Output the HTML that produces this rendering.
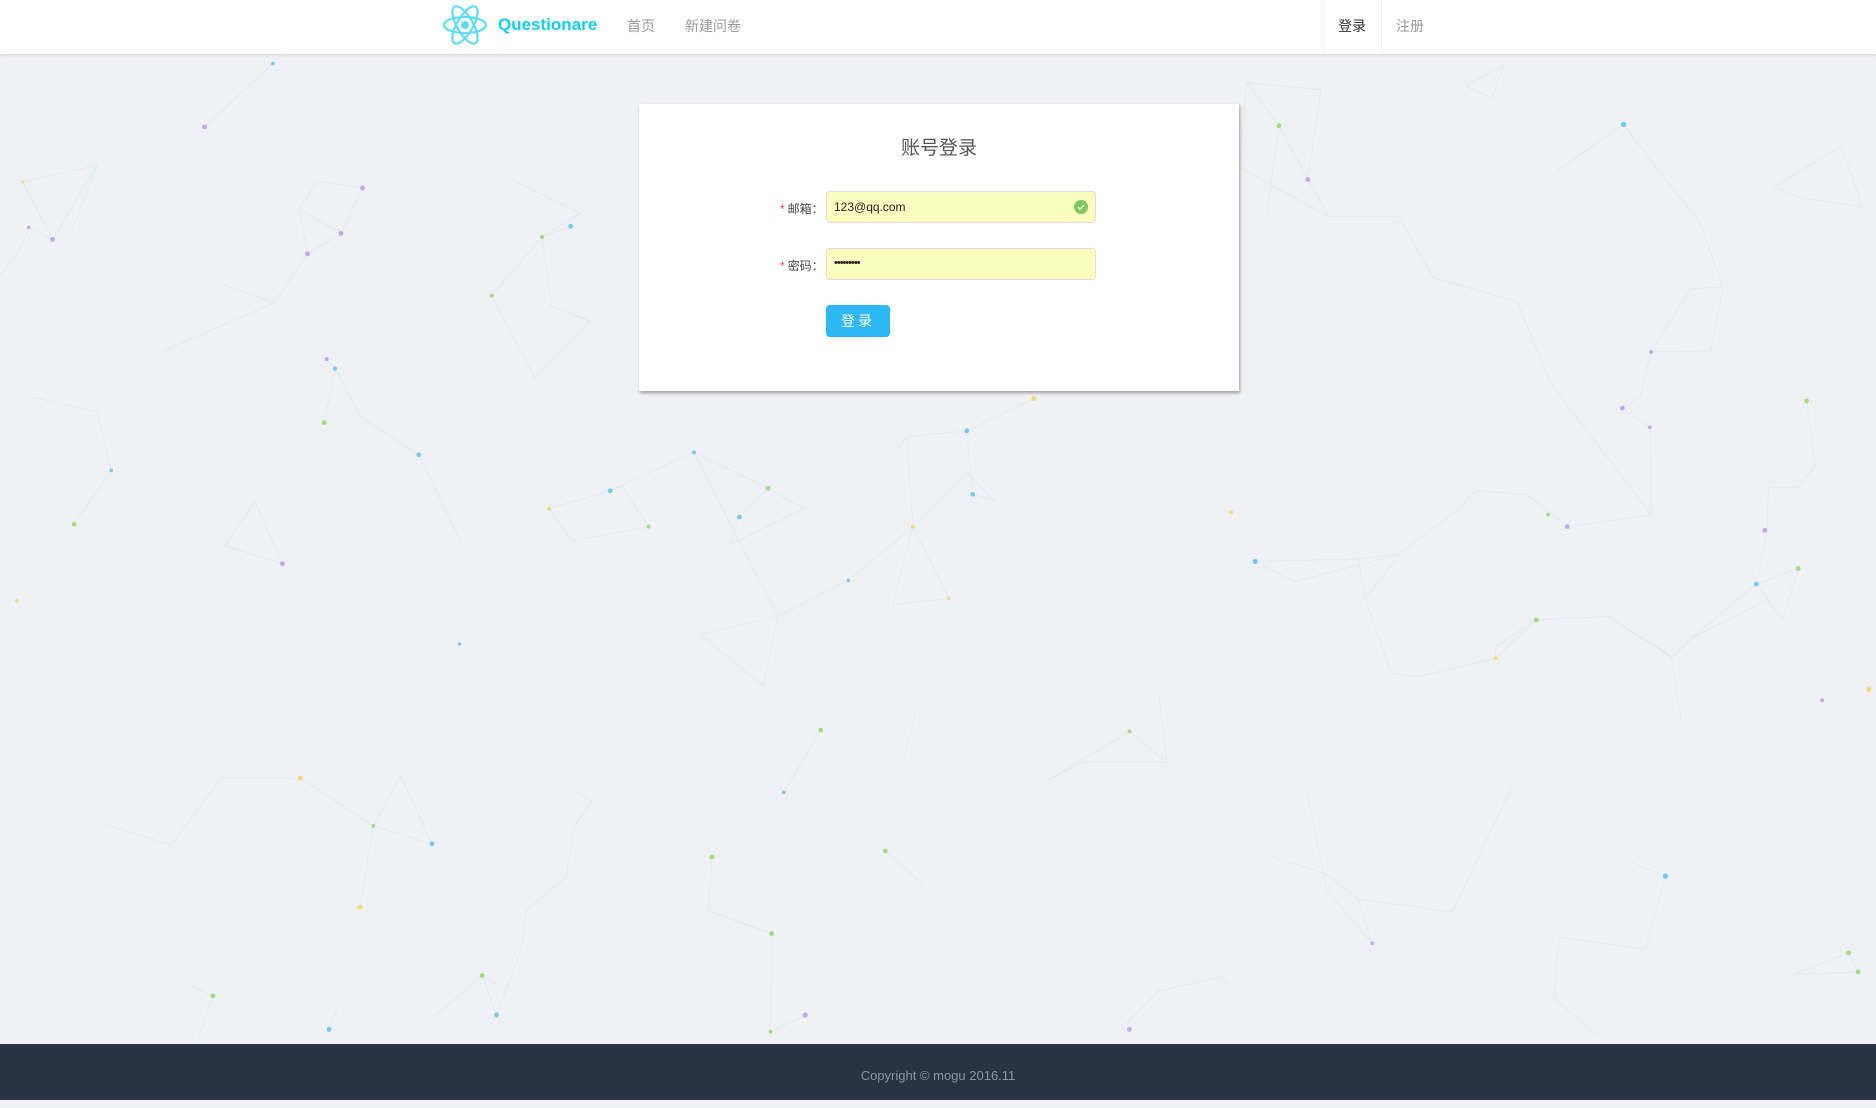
<!DOCTYPE html>
<html><head><meta charset="utf-8"><style>
*{margin:0;padding:0;box-sizing:border-box}
body{width:1876px;height:1100px;background:#eff1f4;font-family:"Liberation Sans","Noto Sans CJK SC",sans-serif;position:relative;overflow:hidden}
#bg{position:absolute;left:0;top:0;width:1876px;height:1100px}
.hdr{position:absolute;left:0;top:0;width:1876px;height:54px;background:#fff;box-shadow:0 1px 3px rgba(0,0,0,.12)}
.brand{position:absolute;left:498px;top:15px;font-size:17px;font-weight:bold;color:#10cff0}
.nav{position:absolute;top:16px;font-size:14px;color:#999}
.tab{position:absolute;top:0;height:54px;border-left:1px solid #f0f0f0;border-right:1px solid #f0f0f0}
.card{position:absolute;left:639px;top:104px;width:600px;height:287px;background:#fff;box-shadow:1px 2px 3px rgba(0,0,0,.35)}
.title{position:absolute;left:0;width:600px;top:29px;text-align:center;font-size:19px;color:#555}
.lbl{position:absolute;font-size:12px;color:#444}
.lbl b{color:#f04134;font-weight:normal;margin-right:3px}
.inp{position:absolute;left:187px;width:270px;height:32px;background:#fafdbe;border:1px solid #ddd;border-radius:4px;font-size:12px;color:#222;padding:8px 7px}
.btn{position:absolute;left:187px;top:201px;width:64px;height:32px;background:#2db7f5;border-radius:4px;color:#fff;font-size:14px;text-align:center;line-height:32px;letter-spacing:3px}
.foot{position:absolute;left:0;top:1044px;width:1876px;height:56px;background:#283444;color:#8c94a0;font-size:13px;text-align:center;line-height:64px}
</style></head><body>
<svg id="bg" viewBox="0 0 1568 919" preserveAspectRatio="none">
<g stroke="#9fd3ee" stroke-width="0.5" fill="none" opacity="0.3">
<path d="M171 106L228 53M19 152L81 138L44 200L24 190L16 210L0 230M19 152L44 200M81 138L60 193M250 175L265 151L303 157L285 195L257 212L250 175L285 195M257 212L229 253L182 236M229 253L137 293M273 300L280 308L301 348L350 380L385 452M280 308L271 353M23 331L81 344L93 393M62 438L93 393M428 150L485 178L453 198L411 247L447 316L493 268L461 256L453 198L477 189M459 425L510 410L520 406L542 440L478 452L459 425M510 410L580 378L642 408L672 425L610 455L618 432L642 408M580 378L650 515L585 530L638 573L650 515L709 485L763 440L793 500L746 505L763 440L808 395L831 418L813 413L808 360L758 365L763 440M808 360L864 333M758 365L750 375M213 419L188 456L236 471L213 419M1042 69L1104 75L1093 150L1069 105L1042 69L1036 140L1111 181L1093 150M1069 105L1059 178M1225 72L1257 54L1247 82L1225 72M1301 143L1357 104L1388 145L1421 186L1440 240L1413 241L1380 294L1430 293L1440 240M1380 294L1371 331L1356 341L1379 357L1380 430L1296 320L1268 252L1198 232L1169 181L1111 181M1483 156L1539 122L1557 173L1503 165L1483 156M1233 410L1276 413L1310 440L1380 430M1233 410L1220 425L1169 463L1135 467L1141 500L1170 463L1082 486L1049 469L1135 467M1141 500L1163 563L1186 565L1250 550L1284 518L1344 515L1398 549L1414 533L1468 488L1490 518L1503 475L1468 488L1477 442L1478 407L1503 407L1517 389L1510 335M1344 515L1397 549L1405 602M1284 518L1250 540L1250 550M1414 533L1475 502M944 611L975 637L904 637L874 653L944 611M969 581L975 637M595 716L592 761L645 780L644 862L673 848M686 610L655 662M740 711L773 740M765 597L755 635M1061 715L1108 730L1135 751L1147 788L1109 744L1093 665M1135 751L1214 762L1265 654M1362 720L1392 732L1375 793L1303 783L1299 834L1336 866M1545 796L1553 812L1499 814L1545 796M415 848L436 792L440 760L473 733L480 690L495 670L480 660M415 848L403 815L362 850L403 815L415 822M185 650L251 650L312 690L335 648L361 705L312 690L301 758M185 650L143 706L89 689M275 860L282 843M160 824L178 832L165 870M937 860L968 828L1021 816L1027 823"/>
</g>
<g opacity="0.85">
<circle cx="171" cy="106" r="2" fill="#b59cf6"/><circle cx="228" cy="53" r="1.5" fill="#5ec1f6"/><circle cx="44" cy="200" r="2" fill="#b59cf6"/><circle cx="24" cy="190" r="1.5" fill="#b59cf6"/><circle cx="19" cy="152" r="1.3" fill="#f4d35e"/><circle cx="303" cy="157" r="2" fill="#b59cf6"/><circle cx="285" cy="195" r="2" fill="#b59cf6"/><circle cx="257" cy="212" r="2" fill="#b59cf6"/><circle cx="273" cy="300" r="1.7" fill="#b59cf6"/><circle cx="280" cy="308" r="1.8" fill="#5ec1f6"/><circle cx="271" cy="353" r="2" fill="#8fd86c"/><circle cx="350" cy="380" r="2" fill="#5ec1f6"/><circle cx="93" cy="393" r="1.5" fill="#5ec1f6"/><circle cx="62" cy="438" r="2" fill="#8fd86c"/><circle cx="236" cy="471" r="2" fill="#b59cf6"/><circle cx="453" cy="198" r="1.7" fill="#8fd86c"/><circle cx="477" cy="189" r="2" fill="#5ec1f6"/><circle cx="411" cy="247" r="1.6" fill="#8fd86c"/><circle cx="459" cy="425" r="1.6" fill="#f4d35e"/><circle cx="510" cy="410" r="2" fill="#5ec1f6"/><circle cx="542" cy="440" r="1.6" fill="#8fd86c"/><circle cx="580" cy="378" r="1.6" fill="#5ec1f6"/><circle cx="642" cy="408" r="2" fill="#8fd86c"/><circle cx="618" cy="432" r="2" fill="#5ec1f6"/><circle cx="808" cy="360" r="2" fill="#5ec1f6"/><circle cx="813" cy="413" r="2" fill="#5ec1f6"/><circle cx="864" cy="333" r="2" fill="#f4d35e"/><circle cx="763" cy="440" r="1.6" fill="#f4d35e"/><circle cx="709" cy="485" r="1.4" fill="#5ec1f6"/><circle cx="793" cy="500" r="1.4" fill="#f4d35e"/><circle cx="1069" cy="105" r="2" fill="#8fd86c"/><circle cx="1093" cy="150" r="2" fill="#b59cf6"/><circle cx="1357" cy="104" r="2.3" fill="#5ec1f6"/><circle cx="1380" cy="294" r="1.6" fill="#b59cf6"/><circle cx="1356" cy="341" r="2" fill="#b59cf6"/><circle cx="1379" cy="357" r="1.6" fill="#b59cf6"/><circle cx="1310" cy="440" r="2" fill="#b59cf6"/><circle cx="1294" cy="430" r="1.6" fill="#8fd86c"/><circle cx="1049" cy="469" r="2.2" fill="#5ec1f6"/><circle cx="1029" cy="428" r="1.6" fill="#f4d35e"/><circle cx="1284" cy="518" r="2" fill="#8fd86c"/><circle cx="1250" cy="550" r="1.6" fill="#f4d35e"/><circle cx="1468" cy="488" r="2" fill="#5ec1f6"/><circle cx="1475" cy="443" r="2" fill="#b59cf6"/><circle cx="1503" cy="475" r="2" fill="#8fd86c"/><circle cx="1510" cy="335" r="2" fill="#8fd86c"/><circle cx="1523" cy="585" r="1.6" fill="#b59cf6"/><circle cx="1562" cy="576" r="2" fill="#f4d35e"/><circle cx="686" cy="610" r="2" fill="#8fd86c"/><circle cx="655" cy="662" r="1.6" fill="#5ec1f6"/><circle cx="740" cy="711" r="2" fill="#8fd86c"/><circle cx="595" cy="716" r="2" fill="#8fd86c"/><circle cx="645" cy="780" r="2" fill="#8fd86c"/><circle cx="673" cy="848" r="2.2" fill="#b59cf6"/><circle cx="644" cy="862" r="1.6" fill="#8fd86c"/><circle cx="251" cy="650" r="2" fill="#f4d35e"/><circle cx="312" cy="690" r="1.6" fill="#8fd86c"/><circle cx="361" cy="705" r="2" fill="#5ec1f6"/><circle cx="301" cy="758" r="2" fill="#f4d35e"/><circle cx="403" cy="815" r="2" fill="#8fd86c"/><circle cx="415" cy="848" r="2" fill="#5ec1f6"/><circle cx="178" cy="832" r="2" fill="#8fd86c"/><circle cx="275" cy="860" r="2" fill="#5ec1f6"/><circle cx="944" cy="611" r="1.6" fill="#8fd86c"/><circle cx="1392" cy="732" r="2.2" fill="#5ec1f6"/><circle cx="1545" cy="796" r="2" fill="#8fd86c"/><circle cx="1553" cy="812" r="2" fill="#8fd86c"/><circle cx="944" cy="860" r="2" fill="#b59cf6"/><circle cx="1147" cy="788" r="1.6" fill="#b59cf6"/><circle cx="14" cy="502" r="1.5" fill="#f4d35e"/><circle cx="384" cy="538" r="1.4" fill="#5ec1f6"/>
</g>
</svg>
<div class="hdr">
<svg style="position:absolute;left:442px;top:3px" width="46" height="44" viewBox="-23 -22 46 44"><g fill="none" stroke="#5fdcf5" stroke-width="2.2"><ellipse rx="21" ry="8"/><ellipse rx="21" ry="8" transform="rotate(60)"/><ellipse rx="21" ry="8" transform="rotate(120)"/></g><circle r="4" fill="#5fdcf5"/></svg>
<div class="brand">Questionare</div>
<div class="nav" style="left:627px">首页</div>
<div class="nav" style="left:685px">新建问卷</div>
<div class="tab" style="left:1323px;width:59px"></div>
<div class="nav" style="left:1338px;color:#333">登录</div>
<div class="nav" style="left:1396px">注册</div>
</div>
<div class="card">
<div class="title">账号登录</div>
<div class="lbl" style="left:141px;top:96px"><b>*</b>邮箱：</div>
<div class="inp" style="top:87px">123@qq.com
<svg style="position:absolute;right:7px;top:8px" width="14" height="14" viewBox="0 0 14 14"><circle cx="7" cy="7" r="7" fill="#7ec95e"/><path d="M4 7.2l2 2 4-4" stroke="#fff" stroke-width="1.3" fill="none"/></svg></div>
<div class="lbl" style="left:141px;top:153px"><b>*</b>密码：</div>
<div class="inp" style="top:144px;font-size:11px;letter-spacing:-1px">•••••••••</div>
<div class="btn">登录</div>
</div>
<div class="foot">Copyright © mogu 2016.11</div>
</body></html>
